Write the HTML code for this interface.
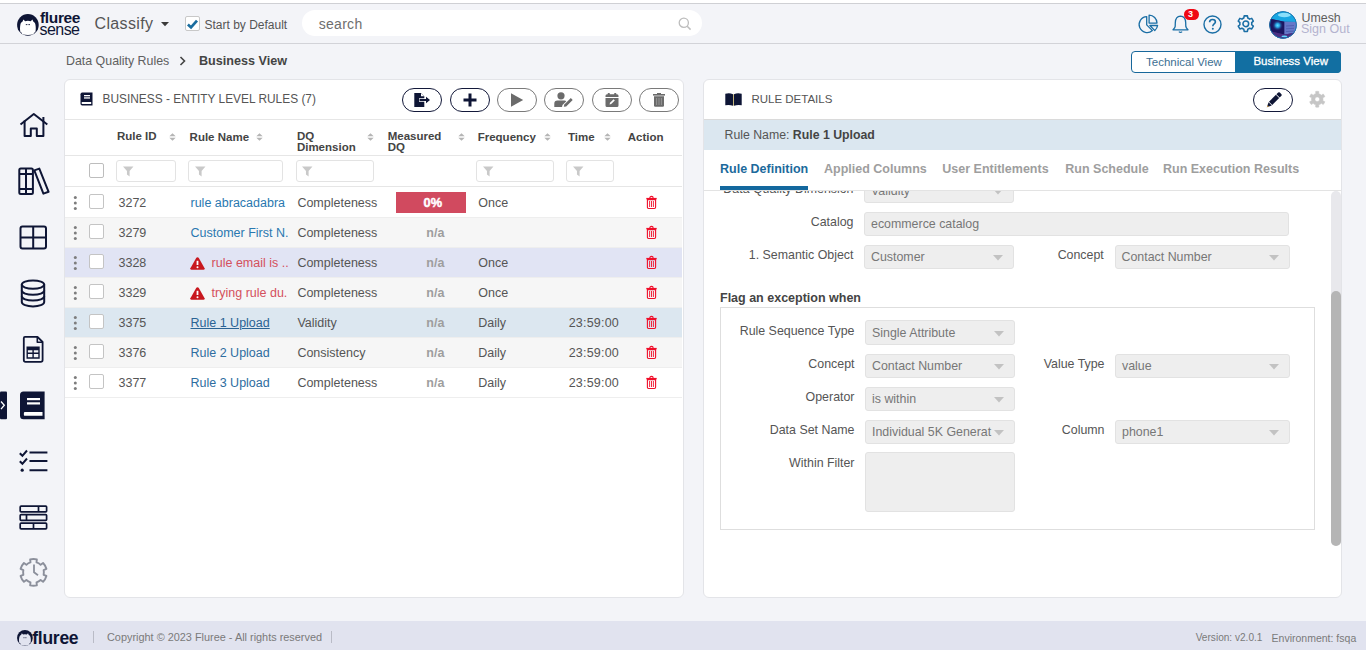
<!DOCTYPE html>
<html><head><meta charset="utf-8">
<style>
*{box-sizing:border-box;margin:0;padding:0}
html,body{width:1366px;height:650px;overflow:hidden}
body{position:relative;background:#f3f4f8;font-family:"Liberation Sans",sans-serif;color:#444}
.a{position:absolute}
.t{position:absolute;white-space:nowrap;line-height:1}
svg{position:absolute;overflow:visible}
</style></head><body>

<!-- top strip -->
<div class="a" style="left:0;top:0;width:1366px;height:3px;background:#fff"></div>
<div class="a" style="left:0;top:3px;width:1366px;height:1px;background:#cfd0d4"></div>
<div class="a" style="left:0;top:43px;width:1366px;height:1px;background:#d2d3d8"></div>

<!-- HEADER -->
<div id="header">
 <!-- logo -->
 <svg style="left:17px;top:13.5px" width="22" height="22" viewBox="0 0 22 22">
  <circle cx="10.9" cy="10.9" r="10.8" fill="#0e1535"/>
  <path d="M3.4 10.5 C3.6 9.2 4.5 8.2 5.6 7.6 L6.3 5.6 L8.2 7.2 Q10.9 6.5 13.6 7.2 L15.5 5.6 L16.2 7.6 C17.3 8.2 18.2 9.2 18.4 10.5 C18.9 13 19 15.8 18.3 18.3 L17 18.8 L16.6 20.2 Q10.9 21.6 5.2 20.2 L4.8 18.8 L3.5 18.3 C2.8 15.8 2.9 13 3.4 10.5Z" fill="#fff"/>
  <path d="M8.8 10.6h1.6M11.4 10.6h1.6" stroke="#0e1535" stroke-width="0.9"/>
 </svg>
 <div class="t" style="left:40px;top:12px;font-size:15.5px;font-weight:bold;color:#0e1535;letter-spacing:-0.35px;line-height:12px">fluree</div>
 <div class="t" style="left:39.5px;top:24px;font-size:16px;color:#0e1535;letter-spacing:-0.55px;line-height:12px">sense</div>
 <div class="t" style="left:94.5px;top:16.3px;font-size:16px;color:#555;letter-spacing:0.35px">Classify</div>
 <svg style="left:161px;top:21.8px" width="8" height="5" viewBox="0 0 8 5"><path d="M0 0h8L4 4.3z" fill="#3a3a3a"/></svg>
 <!-- checkbox -->
 <div class="a" style="left:185px;top:16px;width:15px;height:15px;border:1px solid #c8c8c8;border-radius:2px;background:#fff"></div>
 <svg style="left:187px;top:18px" width="11" height="11" viewBox="0 0 11 11"><path d="M0.9 6.6 L4 9.4 L10 2.6" fill="none" stroke="#1a6d9f" stroke-width="2.7"/></svg>
 <div class="t" style="left:204.5px;top:18.9px;font-size:12px;color:#555">Start by Default</div>
 <!-- search -->
 <div class="a" style="left:302px;top:10px;width:400px;height:26px;background:#fff;border-radius:13px"></div>
 <div class="t" style="left:318.7px;top:16.5px;font-size:14px;color:#6e6e6e;letter-spacing:0.3px">search</div>
 <svg style="left:678px;top:17px" width="14" height="14" viewBox="0 0 14 14"><circle cx="5.8" cy="5.8" r="4.6" fill="none" stroke="#bdbdbd" stroke-width="1.3"/><path d="M9.2 9.2 L12.6 12.6" stroke="#bdbdbd" stroke-width="1.5"/></svg>

 <!-- right icons -->
 <svg style="left:1138px;top:14px" width="21" height="20" viewBox="0 0 21 20">
  <path d="M8.7 2.6 A8 8 0 1 0 14.4 16.6 L8.7 10.9 Z" fill="none" stroke="#1a6ea5" stroke-width="1.3" stroke-linejoin="round"/>
  <path d="M11.1 1.1 A8 8 0 0 1 19 9.1 L11.1 9.1 Z" fill="none" stroke="#1a6ea5" stroke-width="1.3" stroke-linejoin="round"/>
  <path d="M11.9 11.5 L19.6 11.5 Q19.2 14.3 16.8 16.6 Z" fill="none" stroke="#1a6ea5" stroke-width="1.3" stroke-linejoin="round"/>
 </svg>
 <svg style="left:1172px;top:14.5px" width="18" height="19" viewBox="0 0 18 19">
  <path d="M8.5 1.2 C5 1.4 3.4 4.2 3.3 7.8 L3.2 11.4 Q3 13 1.2 14.4 Q0.8 14.9 1.4 14.9 H15.6 Q16.2 14.9 15.8 14.4 Q14 13 13.8 11.4 L13.7 7.8 C13.6 4.2 12 1.4 8.5 1.2Z" fill="none" stroke="#1a6ea5" stroke-width="1.3" stroke-linejoin="round"/>
  <path d="M6.9 16.6 Q8.5 18.3 10.1 16.6" fill="none" stroke="#1a6ea5" stroke-width="1.3"/>
 </svg>
 <div class="a" style="left:1184px;top:9px;width:15px;height:11px;border-radius:6px;background:#f00814"></div>
 <div class="t" style="left:1188px;top:10px;font-size:9px;font-weight:bold;color:#fff">3</div>
 <svg style="left:1203px;top:15px" width="19" height="19" viewBox="0 0 19 19">
  <circle cx="9.5" cy="9.5" r="8.5" fill="none" stroke="#1a6ea5" stroke-width="1.4"/>
  <path d="M6.6 7.2 C6.6 5.4 7.9 4.5 9.5 4.5 C11.2 4.5 12.4 5.6 12.4 7 C12.4 8.9 9.8 9.1 9.8 11.2" fill="none" stroke="#1a6ea5" stroke-width="1.6"/>
  <circle cx="9.8" cy="13.8" r="1" fill="#1a6ea5"/>
 </svg>
 <svg style="left:1237px;top:15.3px" width="17.6" height="17.6" viewBox="0 0 24 24">
  <path d="M9.8 1.2 h4.4 l.5 2.9 a8.4 8.4 0 0 1 2.6 1.5 l2.8-1 2.2 3.8-2.3 1.9 a8.4 8.4 0 0 1 0 3 l2.3 1.9-2.2 3.8-2.8-1 a8.4 8.4 0 0 1-2.6 1.5 l-.5 2.9 h-4.4 l-.5-2.9 a8.4 8.4 0 0 1-2.6-1.5 l-2.8 1-2.2-3.8 2.3-1.9 a8.4 8.4 0 0 1 0-3 l-2.3-1.9 2.2-3.8 2.8 1 a8.4 8.4 0 0 1 2.6-1.5z" fill="none" stroke="#1a6ea5" stroke-width="2.1" stroke-linejoin="round"/>
  <circle cx="12" cy="12" r="3.9" fill="none" stroke="#1a6ea5" stroke-width="2.1"/>
 </svg>
 <!-- avatar -->
 <svg style="left:1269px;top:11px" width="28" height="28" viewBox="0 0 28 28">
  <defs><clipPath id="avc"><circle cx="14" cy="14" r="13.6"/></clipPath>
  <radialGradient id="glow" cx="0.5" cy="0.5" r="0.5"><stop offset="0" stop-color="#5fe0ff"/><stop offset="0.35" stop-color="#2aa8e8"/><stop offset="1" stop-color="#1b1f66" stop-opacity="0"/></radialGradient></defs>
  <g clip-path="url(#avc)">
   <rect width="28" height="28" fill="#3a2a78"/>
   <path d="M0 0 H28 V11 L15.4 10.7 L0 7.5Z" fill="#18a6e2"/>
   <ellipse cx="15.4" cy="4" rx="6.5" ry="2.2" fill="#9fe9ff" opacity="0.85"/>
   <path d="M0 7.5 L15.4 10.7 V23.5 L0 20Z" fill="#1b1660"/>
   <circle cx="8.6" cy="14.4" r="5.5" fill="url(#glow)"/>
   <path d="M15.4 10.7 L28 11 V21.5 L15.4 23.5Z" fill="#6678c8"/>
   <path d="M17 15 L25 14.5 M17 17.8 L25 17.3 M17 20.6 L25 20.1" stroke="#4656a8" stroke-width="0.7"/>
   <path d="M0 20 L15.4 23.5 L28 21.5 V28 H0Z" fill="#4b2f82"/>
   <ellipse cx="15.4" cy="25.3" rx="3" ry="0.9" fill="#5fd8ff"/>
  </g>
  <circle cx="14" cy="14" r="13.4" fill="none" stroke="#1479b0" stroke-width="0.9"/>
 </svg>
 <div class="t" style="left:1301.5px;top:11.8px;font-size:12.4px;color:#5e5e5e">Umesh</div>
 <div class="t" style="left:1301px;top:23px;font-size:12.5px;color:#b3b3cf">Sign Out</div>

 <!-- breadcrumb -->
 <div class="t" style="left:66px;top:55px;font-size:12.4px;color:#606060">Data Quality Rules</div>
 <svg style="left:179px;top:56px" width="7" height="10" viewBox="0 0 7 10"><path d="M1.5 1 L5.5 5 L1.5 9" fill="none" stroke="#444" stroke-width="1.6"/></svg>
 <div class="t" style="left:199px;top:55px;font-size:12.6px;font-weight:bold;color:#444">Business View</div>

 <!-- view toggle -->
 <div class="a" style="left:1131px;top:51px;width:210px;height:22px;border:1px solid #17679b;border-radius:4px;background:#fff"></div>
 <div class="a" style="left:1235px;top:51px;width:106px;height:22px;background:#126fa2;border-radius:0 4px 4px 0"></div>
 <div class="t" style="left:1146px;top:57px;font-size:11.5px;color:#3d6f93">Technical View</div>
 <div class="t" style="left:1253.4px;top:56.2px;font-size:11.5px;color:#fff;-webkit-text-stroke:0.3px #fff">Business View</div>
</div>

<!-- SIDEBAR -->
<svg style="left:0;top:0" width="64" height="621" viewBox="0 0 64 621">
 <g fill="none" stroke="#0e1535" stroke-width="2" stroke-linejoin="round">
  <!-- home -->
  <path d="M20.5 124.5 L33.8 114 L47.3 124.5"/>
  <path d="M24.6 120.5 V136 H30.8 V128.5 H36.8 V136 H43.4 V117"/>
  <!-- books -->
  <rect x="19.3" y="168.5" width="13.6" height="25.4" rx="1.5"/>
  <path d="M26 168.5 V194 M19.3 174 H33 M19.3 189 H33"/>
  <path d="M34.3 170.4 L39.3 168.6 L48.6 191.8 L43.4 193.6 Z"/>
  <!-- grid -->
  <rect x="20.5" y="226.5" width="25.5" height="22" rx="2"/>
  <path d="M33.2 226.5 V248.5 M20.5 237.4 H46"/>
  <!-- database -->
  <ellipse cx="33" cy="284.6" rx="11.2" ry="4.2"/>
  <path d="M21.8 284.6 V302 C21.8 304.6 26.8 306.4 33 306.4 C39.2 306.4 44.2 304.6 44.2 302 V284.6"/>
  <path d="M21.8 290.5 C21.8 293 26.8 294.8 33 294.8 C39.2 294.8 44.2 293 44.2 290.5"/>
  <path d="M21.8 296.3 C21.8 298.8 26.8 300.6 33 300.6 C39.2 300.6 44.2 298.8 44.2 296.3"/>
  <!-- file spreadsheet -->
  <path d="M25 336.8 H37.5 L42.6 342 V360 Q42.6 361.8 40.8 361.8 H25.5 Q23.8 361.8 23.8 360 V338.3 Q23.8 336.8 25 336.8Z" stroke-width="1.8"/>
  <path d="M37.3 337 V342.2 H42.5" stroke-width="1.6"/>
 </g>
 <g fill="#0e1535">
  <path d="M26.5 346.5 H39.7 V358.7 H26.5Z M27.9 350.2 H32.4 V352.6 H27.9Z M33.8 350.2 H38.3 V352.6 H33.8Z M27.9 354 H32.4 V357.3 H27.9Z M33.8 354 H38.3 V357.3 H33.8Z" fill-rule="evenodd"/>
  <!-- active book -->
  <path d="M23.5 391.5 H44.6 V419.2 H23.5 Q20 419.2 20 415.7 V395 Q20 391.5 23.5 391.5Z"/>
  <!-- indicator -->
  <rect x="0" y="391.5" width="7" height="27.7" rx="1"/>
 </g>
 <g fill="#fff">
  <rect x="27" y="398" width="13" height="2.2"/>
  <rect x="27" y="402.3" width="13" height="2.2"/>
  <path d="M24.6 412 H42.5 V415.8 H24.6 Q23.8 415.8 23.8 413.9 Q23.8 412 24.6 412Z"/>
 </g>
 <path d="M1 401.5 L4.3 405.3 L1 409.1" fill="none" stroke="#fff" stroke-width="1.3"/>
 <g fill="none" stroke="#0e1535" stroke-width="2">
  <!-- checklist -->
  <path d="M19.8 453.2 L22.4 455.8 L27 450.5" />
  <path d="M19.8 461.2 L22.4 463.8 L27 458.5" />
  <path d="M29.5 452.6 H47.4 M29.5 461 H47.4 M29.5 470.2 H47.4"/>
 </g>
 <circle cx="22.2" cy="470.2" r="1.6" fill="#0e1535"/>
 <g fill="none" stroke="#0e1535" stroke-width="2">
  <!-- rows -->
  <rect x="20.2" y="506.1" width="26.4" height="5.8" rx="0.9" stroke-width="1.7"/>
  <rect x="20.2" y="514.6" width="26.4" height="5.8" rx="0.9" stroke-width="1.7"/>
  <rect x="20.2" y="523.1" width="26.4" height="5.8" rx="0.9" stroke-width="1.7"/>
  <path d="M38.5 506.1 V511.9 M26.5 514.6 V520.4 M33.5 523.1 V528.9" stroke-width="1.7"/>
 </g>
 <!-- gear clock -->
 <g fill="none" stroke="#8b8f9b" stroke-width="1.9" stroke-linejoin="round">
  <path d="M30.49 562.44 L30.16 559.42 A13.4 13.4 0 0 1 36.84 559.42 L36.51 562.44 A10.4 10.4 0 0 1 40.62 564.82 L43.07 563.02 A13.4 13.4 0 0 1 46.41 568.81 L43.63 570.03 A10.4 10.4 0 0 1 43.63 574.77 L46.41 575.99 A13.4 13.4 0 0 1 43.07 581.78 L40.62 579.98 A10.4 10.4 0 0 1 36.51 582.36 L36.84 585.38 A13.4 13.4 0 0 1 30.16 585.38 L30.49 582.36 A10.4 10.4 0 0 1 26.38 579.98 L23.93 581.78 A13.4 13.4 0 0 1 20.59 575.99 L23.37 574.77 A10.4 10.4 0 0 1 23.37 570.03 L20.59 568.81 A13.4 13.4 0 0 1 23.93 563.02 L26.38 564.82 A10.4 10.4 0 0 1 30.49 562.44Z"/>
  <path d="M34 564.6 V572.3 L38 575.3" stroke-width="1.8"/>
 </g>
</svg>

<!-- LEFT PANEL -->
<div class="a" style="left:64px;top:79px;width:620px;height:519px;background:#fff;border:1px solid #e3e4e8;border-radius:6px"></div>

<!-- LEFT PANEL CONTENT -->
<svg style="left:80px;top:92px" width="13" height="14" viewBox="0 0 13 14">
 <path d="M2.2 0.5 H12.5 V13.5 H2.2 Q0.5 13.5 0.5 11.8 V2.2 Q0.5 0.5 2.2 0.5Z" fill="#0e1535"/>
 <rect x="4" y="3" width="6" height="1.3" fill="#fff"/><rect x="4" y="5.3" width="6" height="1.3" fill="#fff"/>
 <path d="M2.3 10 H11.2 V12 H2.3 Q1.6 12 1.6 11 Q1.6 10 2.3 10Z" fill="#fff"/>
</svg>
<div class="t" style="left:102.5px;top:93.6px;font-size:11.9px;color:#555">BUSINESS - ENTITY LEVEL RULES (7)</div>

<div class="a" style="left:402px;top:88px;width:40px;height:24px;border:1.5px solid #13193a;border-radius:12px"></div>
<div class="a" style="left:450px;top:88px;width:40px;height:24px;border:1.5px solid #13193a;border-radius:12px"></div>
<div class="a" style="left:497px;top:88px;width:40px;height:24px;border:1.5px solid #7a7a7a;border-radius:12px"></div>
<div class="a" style="left:544px;top:88px;width:40px;height:24px;border:1.5px solid #7a7a7a;border-radius:12px"></div>
<div class="a" style="left:592px;top:88px;width:40px;height:24px;border:1.5px solid #7a7a7a;border-radius:12px"></div>
<div class="a" style="left:639px;top:88px;width:40px;height:24px;border:1.5px solid #7a7a7a;border-radius:12px"></div>
<svg style="left:414px;top:93px" width="17" height="14" viewBox="0 0 17 14">
 <path d="M0.3 0 H7 L10.3 3.3 V5.3 H5 V8.7 H10.3 V14 H0.3Z" fill="#0e1535"/><path d="M7 0 V3.3 H10.3Z" fill="#fff"/>
 <path d="M5.5 6 H12 V3.8 L16 7 L12 10.2 V8 H5.5Z" fill="#0e1535"/>
</svg>
<svg style="left:463px;top:93px" width="14" height="14" viewBox="0 0 14 14"><path d="M7 0.5 V13.5 M0.5 7 H13.5" stroke="#0e1535" stroke-width="3"/></svg>
<svg style="left:510px;top:93px" width="14" height="14" viewBox="0 0 14 14"><path d="M1 0.3 L13.2 7 L1 13.7Z" fill="#6b6b6b"/></svg>
<svg style="left:554px;top:92px" width="20" height="15" viewBox="0 0 20 15">
 <circle cx="7" cy="3.8" r="3.6" fill="#6b6b6b"/>
 <path d="M0.3 15 V11.8 Q0.3 8.6 3.5 8.6 H10.5 Q11.6 8.6 12.3 9.2 L8.5 13 L8 15Z" fill="#6b6b6b"/>
 <path d="M9.8 14.8 L10.3 12.6 L16.8 6.1 L18.7 8 L12.2 14.5Z" fill="#6b6b6b"/>
</svg>
<svg style="left:605px;top:93px" width="14" height="14" viewBox="0 0 14 14">
 <path d="M2 1.3 H12 Q13.5 1.3 13.5 2.8 V12.5 Q13.5 14 12 14 H2 Q0.5 14 0.5 12.5 V2.8 Q0.5 1.3 2 1.3Z M0.5 3.9 H13.5 V4.9 H0.5Z" fill="#6b6b6b" fill-rule="evenodd"/>
 <rect x="2.8" y="0" width="2" height="2.6" rx="0.6" fill="#6b6b6b"/><rect x="9.2" y="0" width="2" height="2.6" rx="0.6" fill="#6b6b6b"/>
 <path d="M4.6 11.5 L5 9.8 L8.6 6.2 L9.8 7.4 L6.2 11Z" fill="#fff"/>
</svg>
<svg style="left:653px;top:93px" width="12" height="14" viewBox="0 0 12 14">
 <rect x="0" y="1" width="12" height="1.6" fill="#6b6b6b"/><rect x="4" y="0" width="4" height="1.4" fill="#6b6b6b"/>
 <path d="M1 3.3 H11 V12.6 Q11 13.8 9.8 13.8 H2.2 Q1 13.8 1 12.6Z" fill="#6b6b6b"/>
 <path d="M3.6 5 V12 M6 5 V12 M8.4 5 V12" stroke="#9a9a9a" stroke-width="0.9"/>
</svg>
<div class="a" style="left:65px;top:119px;width:618px;height:1px;background:#e6e6e6"></div>

<div class="t" style="left:117px;top:130.8px;font-size:11.5px;font-weight:bold;color:#444">Rule ID</div><svg style="left:169px;top:133px" width="7" height="8" viewBox="0 0 7 8"><path d="M0.3 3.2 L3.5 0.2 L6.7 3.2Z M0.3 4.8 L3.5 7.8 L6.7 4.8Z" fill="#b5b5b5"/></svg>
<div class="t" style="left:189.6px;top:131.8px;font-size:11.5px;font-weight:bold;color:#444">Rule Name</div><svg style="left:256px;top:133px" width="7" height="8" viewBox="0 0 7 8"><path d="M0.3 3.2 L3.5 0.2 L6.7 3.2Z M0.3 4.8 L3.5 7.8 L6.7 4.8Z" fill="#b5b5b5"/></svg>
<div class="t" style="left:296.9px;top:131.2px;font-size:11.5px;font-weight:bold;color:#444;line-height:11px">DQ<br>Dimension</div><svg style="left:367px;top:133px" width="7" height="8" viewBox="0 0 7 8"><path d="M0.3 3.2 L3.5 0.2 L6.7 3.2Z M0.3 4.8 L3.5 7.8 L6.7 4.8Z" fill="#b5b5b5"/></svg>
<div class="t" style="left:387.7px;top:131.2px;font-size:11.5px;font-weight:bold;color:#444;line-height:11px">Measured<br>DQ</div><svg style="left:457.5px;top:133px" width="7" height="8" viewBox="0 0 7 8"><path d="M0.3 3.2 L3.5 0.2 L6.7 3.2Z M0.3 4.8 L3.5 7.8 L6.7 4.8Z" fill="#b5b5b5"/></svg>
<div class="t" style="left:477.7px;top:131.8px;font-size:11.5px;font-weight:bold;color:#444">Frequency</div><svg style="left:544px;top:133px" width="7" height="8" viewBox="0 0 7 8"><path d="M0.3 3.2 L3.5 0.2 L6.7 3.2Z M0.3 4.8 L3.5 7.8 L6.7 4.8Z" fill="#b5b5b5"/></svg>
<div class="t" style="left:568px;top:131.8px;font-size:11.5px;font-weight:bold;color:#444">Time</div><svg style="left:603.5px;top:133px" width="7" height="8" viewBox="0 0 7 8"><path d="M0.3 3.2 L3.5 0.2 L6.7 3.2Z M0.3 4.8 L3.5 7.8 L6.7 4.8Z" fill="#b5b5b5"/></svg>
<div class="t" style="left:627.8px;top:131.8px;font-size:11.5px;font-weight:bold;color:#444">Action</div>
<div class="a" style="left:65px;top:155px;width:617px;height:1px;background:#e6e6e6"></div>
<div class="a" style="left:89px;top:163px;width:15px;height:15px;border:1px solid #bdbdbd;border-radius:2px;background:#fff"></div>
<div class="a" style="left:116px;top:160px;width:60px;height:22px;border:1px solid #e3e3e3;border-radius:3px;background:#fff"></div>
<svg style="left:122.8px;top:166px" width="11" height="11" viewBox="0 0 10 10"><path d="M0 0.5 H9.5 L6 4.6 V9.5 L3.6 7.8 V4.6Z" fill="#c9c9c9"/></svg>
<div class="a" style="left:188px;top:160px;width:95px;height:22px;border:1px solid #e3e3e3;border-radius:3px;background:#fff"></div>
<svg style="left:194.8px;top:166px" width="11" height="11" viewBox="0 0 10 10"><path d="M0 0.5 H9.5 L6 4.6 V9.5 L3.6 7.8 V4.6Z" fill="#c9c9c9"/></svg>
<div class="a" style="left:295.5px;top:160px;width:78px;height:22px;border:1px solid #e3e3e3;border-radius:3px;background:#fff"></div>
<svg style="left:302.3px;top:166px" width="11" height="11" viewBox="0 0 10 10"><path d="M0 0.5 H9.5 L6 4.6 V9.5 L3.6 7.8 V4.6Z" fill="#c9c9c9"/></svg>
<div class="a" style="left:476px;top:160px;width:78px;height:22px;border:1px solid #e3e3e3;border-radius:3px;background:#fff"></div>
<svg style="left:482.8px;top:166px" width="11" height="11" viewBox="0 0 10 10"><path d="M0 0.5 H9.5 L6 4.6 V9.5 L3.6 7.8 V4.6Z" fill="#c9c9c9"/></svg>
<div class="a" style="left:566px;top:160px;width:48px;height:22px;border:1px solid #e3e3e3;border-radius:3px;background:#fff"></div>
<svg style="left:572.8px;top:166px" width="11" height="11" viewBox="0 0 10 10"><path d="M0 0.5 H9.5 L6 4.6 V9.5 L3.6 7.8 V4.6Z" fill="#c9c9c9"/></svg>
<div class="a" style="left:65px;top:185.5px;width:617px;height:1.6px;background:#e6e6e6"></div>
<div class="a" style="left:65px;top:188px;width:617px;height:29px;background:#fff"></div>
<svg style="left:72px;top:187px" width="6" height="30" viewBox="0 0 6 30"><circle cx="3.3" cy="10.4" r="1.5" fill="#7d7d7d"/><circle cx="3.3" cy="15.9" r="1.5" fill="#7d7d7d"/><circle cx="3.3" cy="21.4" r="1.5" fill="#7d7d7d"/></svg>
<div class="a" style="left:89px;top:194px;width:14.6px;height:14.6px;border:1px solid #c4c4c4;border-radius:2px;background:#fff"></div>
<div class="t" style="left:118.5px;top:197.0px;font-size:12.5px;color:#555">3272</div>
<div class="t" style="left:190.5px;top:197.0px;font-size:12.5px;color:#2a78b0;">rule abracadabra</div>
<div class="t" style="left:297.4px;top:197.0px;font-size:12.5px;color:#555">Completeness</div>
<div class="a" style="left:396px;top:192.3px;width:70px;height:20.5px;background:#d14a5f"></div>
<div class="t" style="left:398px;width:70px;text-align:center;top:197px;font-size:12.8px;font-weight:700;color:#fff;letter-spacing:0.2px;-webkit-text-stroke:0.45px #fff">0%</div>
<div class="t" style="left:478.3px;top:197.0px;font-size:12.5px;color:#555">Once</div>
<svg style="left:646px;top:196.0px" width="11" height="13" viewBox="0 0 11 13"><path d="M0.3 2.6 H10.7" stroke="#f00f2a" stroke-width="1.4"/><path d="M3.8 2.2 Q3.8 0.4 5.5 0.4 Q7.2 0.4 7.2 2.2" fill="none" stroke="#f00f2a" stroke-width="1.1"/><path d="M1.4 3.6 H9.6 V11.3 Q9.6 12.5 8.4 12.5 H2.6 Q1.4 12.5 1.4 11.3Z" fill="none" stroke="#f00f2a" stroke-width="1.1"/><path d="M3.6 5 V11 M5.5 5 V11 M7.4 5 V11" stroke="#f00f2a" stroke-width="0.9"/></svg>
<div class="a" style="left:65px;top:217px;width:617px;height:1px;background:#eeeeee"></div>
<div class="a" style="left:65px;top:218px;width:617px;height:29px;background:#f6f6f6"></div>
<svg style="left:72px;top:217px" width="6" height="30" viewBox="0 0 6 30"><circle cx="3.3" cy="10.4" r="1.5" fill="#7d7d7d"/><circle cx="3.3" cy="15.9" r="1.5" fill="#7d7d7d"/><circle cx="3.3" cy="21.4" r="1.5" fill="#7d7d7d"/></svg>
<div class="a" style="left:89px;top:224px;width:14.6px;height:14.6px;border:1px solid #c4c4c4;border-radius:2px;background:#fff"></div>
<div class="t" style="left:118.5px;top:227.0px;font-size:12.5px;color:#555">3279</div>
<div class="t" style="left:190.5px;top:227.0px;font-size:12.5px;color:#2a78b0;">Customer First N.</div>
<div class="t" style="left:297.4px;top:227.0px;font-size:12.5px;color:#555">Completeness</div>
<div class="t" style="left:426.3px;top:227.0px;font-size:12.5px;font-weight:bold;color:#9e9e9e">n/a</div>
<svg style="left:646px;top:226.0px" width="11" height="13" viewBox="0 0 11 13"><path d="M0.3 2.6 H10.7" stroke="#f00f2a" stroke-width="1.4"/><path d="M3.8 2.2 Q3.8 0.4 5.5 0.4 Q7.2 0.4 7.2 2.2" fill="none" stroke="#f00f2a" stroke-width="1.1"/><path d="M1.4 3.6 H9.6 V11.3 Q9.6 12.5 8.4 12.5 H2.6 Q1.4 12.5 1.4 11.3Z" fill="none" stroke="#f00f2a" stroke-width="1.1"/><path d="M3.6 5 V11 M5.5 5 V11 M7.4 5 V11" stroke="#f00f2a" stroke-width="0.9"/></svg>
<div class="a" style="left:65px;top:247px;width:617px;height:1px;background:#eeeeee"></div>
<div class="a" style="left:65px;top:248px;width:617px;height:29px;background:#e1e4f4"></div>
<svg style="left:72px;top:247px" width="6" height="30" viewBox="0 0 6 30"><circle cx="3.3" cy="10.4" r="1.5" fill="#7d7d7d"/><circle cx="3.3" cy="15.9" r="1.5" fill="#7d7d7d"/><circle cx="3.3" cy="21.4" r="1.5" fill="#7d7d7d"/></svg>
<div class="a" style="left:89px;top:254px;width:14.6px;height:14.6px;border:1px solid #c4c4c4;border-radius:2px;background:#fff"></div>
<div class="t" style="left:118.5px;top:257.0px;font-size:12.5px;color:#555">3328</div>
<svg style="left:190px;top:257px" width="15" height="13" viewBox="0 0 15 13"><path d="M7.5 0.3 Q8.3 0.3 8.8 1.1 L14.6 11.3 Q15.1 12.6 13.6 12.7 H1.4 Q-0.1 12.6 0.4 11.3 L6.2 1.1 Q6.7 0.3 7.5 0.3Z" fill="#c8171e"/><path d="M7.5 3.8 V8" stroke="#fff" stroke-width="1.8"/><circle cx="7.5" cy="10.2" r="1" fill="#fff"/></svg>
<div class="t" style="left:211.6px;top:257.0px;font-size:12.5px;color:#d4505c;">rule email is ..</div>
<div class="t" style="left:297.4px;top:257.0px;font-size:12.5px;color:#555">Completeness</div>
<div class="t" style="left:426.3px;top:257.0px;font-size:12.5px;font-weight:bold;color:#9e9e9e">n/a</div>
<div class="t" style="left:478.3px;top:257.0px;font-size:12.5px;color:#555">Once</div>
<svg style="left:646px;top:256.0px" width="11" height="13" viewBox="0 0 11 13"><path d="M0.3 2.6 H10.7" stroke="#f00f2a" stroke-width="1.4"/><path d="M3.8 2.2 Q3.8 0.4 5.5 0.4 Q7.2 0.4 7.2 2.2" fill="none" stroke="#f00f2a" stroke-width="1.1"/><path d="M1.4 3.6 H9.6 V11.3 Q9.6 12.5 8.4 12.5 H2.6 Q1.4 12.5 1.4 11.3Z" fill="none" stroke="#f00f2a" stroke-width="1.1"/><path d="M3.6 5 V11 M5.5 5 V11 M7.4 5 V11" stroke="#f00f2a" stroke-width="0.9"/></svg>
<div class="a" style="left:65px;top:277px;width:617px;height:1px;background:#eeeeee"></div>
<div class="a" style="left:65px;top:278px;width:617px;height:29px;background:#f6f6f6"></div>
<svg style="left:72px;top:277px" width="6" height="30" viewBox="0 0 6 30"><circle cx="3.3" cy="10.4" r="1.5" fill="#7d7d7d"/><circle cx="3.3" cy="15.9" r="1.5" fill="#7d7d7d"/><circle cx="3.3" cy="21.4" r="1.5" fill="#7d7d7d"/></svg>
<div class="a" style="left:89px;top:284px;width:14.6px;height:14.6px;border:1px solid #c4c4c4;border-radius:2px;background:#fff"></div>
<div class="t" style="left:118.5px;top:287.0px;font-size:12.5px;color:#555">3329</div>
<svg style="left:190px;top:287px" width="15" height="13" viewBox="0 0 15 13"><path d="M7.5 0.3 Q8.3 0.3 8.8 1.1 L14.6 11.3 Q15.1 12.6 13.6 12.7 H1.4 Q-0.1 12.6 0.4 11.3 L6.2 1.1 Q6.7 0.3 7.5 0.3Z" fill="#c8171e"/><path d="M7.5 3.8 V8" stroke="#fff" stroke-width="1.8"/><circle cx="7.5" cy="10.2" r="1" fill="#fff"/></svg>
<div class="t" style="left:211.6px;top:287.0px;font-size:12.5px;color:#d4505c;">trying rule du.</div>
<div class="t" style="left:297.4px;top:287.0px;font-size:12.5px;color:#555">Completeness</div>
<div class="t" style="left:426.3px;top:287.0px;font-size:12.5px;font-weight:bold;color:#9e9e9e">n/a</div>
<div class="t" style="left:478.3px;top:287.0px;font-size:12.5px;color:#555">Once</div>
<svg style="left:646px;top:286.0px" width="11" height="13" viewBox="0 0 11 13"><path d="M0.3 2.6 H10.7" stroke="#f00f2a" stroke-width="1.4"/><path d="M3.8 2.2 Q3.8 0.4 5.5 0.4 Q7.2 0.4 7.2 2.2" fill="none" stroke="#f00f2a" stroke-width="1.1"/><path d="M1.4 3.6 H9.6 V11.3 Q9.6 12.5 8.4 12.5 H2.6 Q1.4 12.5 1.4 11.3Z" fill="none" stroke="#f00f2a" stroke-width="1.1"/><path d="M3.6 5 V11 M5.5 5 V11 M7.4 5 V11" stroke="#f00f2a" stroke-width="0.9"/></svg>
<div class="a" style="left:65px;top:307px;width:617px;height:1px;background:#eeeeee"></div>
<div class="a" style="left:65px;top:308px;width:617px;height:29px;background:#dce7f0"></div>
<svg style="left:72px;top:307px" width="6" height="30" viewBox="0 0 6 30"><circle cx="3.3" cy="10.4" r="1.5" fill="#7d7d7d"/><circle cx="3.3" cy="15.9" r="1.5" fill="#7d7d7d"/><circle cx="3.3" cy="21.4" r="1.5" fill="#7d7d7d"/></svg>
<div class="a" style="left:89px;top:314px;width:14.6px;height:14.6px;border:1px solid #c4c4c4;border-radius:2px;background:#fff"></div>
<div class="t" style="left:118.5px;top:317.0px;font-size:12.5px;color:#555">3375</div>
<div class="t" style="left:190.5px;top:317.0px;font-size:12.5px;color:#2a6394;text-decoration:underline;">Rule 1 Upload</div>
<div class="t" style="left:297.4px;top:317.0px;font-size:12.5px;color:#555">Validity</div>
<div class="t" style="left:426.3px;top:317.0px;font-size:12.5px;font-weight:bold;color:#9e9e9e">n/a</div>
<div class="t" style="left:478.3px;top:317.0px;font-size:12.5px;color:#555">Daily</div>
<div class="t" style="left:568.7px;top:317.0px;font-size:12.5px;color:#555;letter-spacing:0.2px">23:59:00</div>
<svg style="left:646px;top:316.0px" width="11" height="13" viewBox="0 0 11 13"><path d="M0.3 2.6 H10.7" stroke="#f00f2a" stroke-width="1.4"/><path d="M3.8 2.2 Q3.8 0.4 5.5 0.4 Q7.2 0.4 7.2 2.2" fill="none" stroke="#f00f2a" stroke-width="1.1"/><path d="M1.4 3.6 H9.6 V11.3 Q9.6 12.5 8.4 12.5 H2.6 Q1.4 12.5 1.4 11.3Z" fill="none" stroke="#f00f2a" stroke-width="1.1"/><path d="M3.6 5 V11 M5.5 5 V11 M7.4 5 V11" stroke="#f00f2a" stroke-width="0.9"/></svg>
<div class="a" style="left:65px;top:337px;width:617px;height:1px;background:#eeeeee"></div>
<div class="a" style="left:65px;top:338px;width:617px;height:29px;background:#f6f6f6"></div>
<svg style="left:72px;top:337px" width="6" height="30" viewBox="0 0 6 30"><circle cx="3.3" cy="10.4" r="1.5" fill="#7d7d7d"/><circle cx="3.3" cy="15.9" r="1.5" fill="#7d7d7d"/><circle cx="3.3" cy="21.4" r="1.5" fill="#7d7d7d"/></svg>
<div class="a" style="left:89px;top:344px;width:14.6px;height:14.6px;border:1px solid #c4c4c4;border-radius:2px;background:#fff"></div>
<div class="t" style="left:118.5px;top:347.0px;font-size:12.5px;color:#555">3376</div>
<div class="t" style="left:190.5px;top:347.0px;font-size:12.5px;color:#2d6da0;">Rule 2 Upload</div>
<div class="t" style="left:297.4px;top:347.0px;font-size:12.5px;color:#555">Consistency</div>
<div class="t" style="left:426.3px;top:347.0px;font-size:12.5px;font-weight:bold;color:#9e9e9e">n/a</div>
<div class="t" style="left:478.3px;top:347.0px;font-size:12.5px;color:#555">Daily</div>
<div class="t" style="left:568.7px;top:347.0px;font-size:12.5px;color:#555;letter-spacing:0.2px">23:59:00</div>
<svg style="left:646px;top:346.0px" width="11" height="13" viewBox="0 0 11 13"><path d="M0.3 2.6 H10.7" stroke="#f00f2a" stroke-width="1.4"/><path d="M3.8 2.2 Q3.8 0.4 5.5 0.4 Q7.2 0.4 7.2 2.2" fill="none" stroke="#f00f2a" stroke-width="1.1"/><path d="M1.4 3.6 H9.6 V11.3 Q9.6 12.5 8.4 12.5 H2.6 Q1.4 12.5 1.4 11.3Z" fill="none" stroke="#f00f2a" stroke-width="1.1"/><path d="M3.6 5 V11 M5.5 5 V11 M7.4 5 V11" stroke="#f00f2a" stroke-width="0.9"/></svg>
<div class="a" style="left:65px;top:367px;width:617px;height:1px;background:#eeeeee"></div>
<div class="a" style="left:65px;top:368px;width:617px;height:29px;background:#fff"></div>
<svg style="left:72px;top:367px" width="6" height="30" viewBox="0 0 6 30"><circle cx="3.3" cy="10.4" r="1.5" fill="#7d7d7d"/><circle cx="3.3" cy="15.9" r="1.5" fill="#7d7d7d"/><circle cx="3.3" cy="21.4" r="1.5" fill="#7d7d7d"/></svg>
<div class="a" style="left:89px;top:374px;width:14.6px;height:14.6px;border:1px solid #c4c4c4;border-radius:2px;background:#fff"></div>
<div class="t" style="left:118.5px;top:377.0px;font-size:12.5px;color:#555">3377</div>
<div class="t" style="left:190.5px;top:377.0px;font-size:12.5px;color:#2d6da0;">Rule 3 Upload</div>
<div class="t" style="left:297.4px;top:377.0px;font-size:12.5px;color:#555">Completeness</div>
<div class="t" style="left:426.3px;top:377.0px;font-size:12.5px;font-weight:bold;color:#9e9e9e">n/a</div>
<div class="t" style="left:478.3px;top:377.0px;font-size:12.5px;color:#555">Daily</div>
<div class="t" style="left:568.7px;top:377.0px;font-size:12.5px;color:#555;letter-spacing:0.2px">23:59:00</div>
<svg style="left:646px;top:376.0px" width="11" height="13" viewBox="0 0 11 13"><path d="M0.3 2.6 H10.7" stroke="#f00f2a" stroke-width="1.4"/><path d="M3.8 2.2 Q3.8 0.4 5.5 0.4 Q7.2 0.4 7.2 2.2" fill="none" stroke="#f00f2a" stroke-width="1.1"/><path d="M1.4 3.6 H9.6 V11.3 Q9.6 12.5 8.4 12.5 H2.6 Q1.4 12.5 1.4 11.3Z" fill="none" stroke="#f00f2a" stroke-width="1.1"/><path d="M3.6 5 V11 M5.5 5 V11 M7.4 5 V11" stroke="#f00f2a" stroke-width="0.9"/></svg>
<div class="a" style="left:65px;top:397px;width:617px;height:1px;background:#eeeeee"></div>
<!-- RIGHT PANEL -->
<div class="a" style="left:703px;top:79px;width:639px;height:519px;background:#fff;border:1px solid #e3e4e8;border-radius:6px"></div>

<!-- RIGHT PANEL CONTENT -->
<svg style="left:724.5px;top:92.5px" width="17" height="13" viewBox="0 0 17 13">
 <path d="M0.3 0.8 Q4.5 -0.3 8 1.2 V12.8 Q4.5 11.4 0.3 12.3Z" fill="#0e1535"/>
 <path d="M16.7 0.8 Q12.5 -0.3 9 1.2 V12.8 Q12.5 11.4 16.7 12.3Z" fill="#0e1535"/>
 <path d="M8.5 1.3 V12.6" stroke="#b8a45a" stroke-width="0.8"/>
</svg>
<div class="t" style="left:751.4px;top:94px;font-size:11.5px;color:#555">RULE DETAILS</div>
<div class="a" style="left:1253px;top:88px;width:40px;height:24px;border:1.8px solid #13193a;border-radius:12px"></div>
<svg style="left:1265.8px;top:92.6px" width="15" height="15" viewBox="0 0 15 15">
 <g transform="rotate(45 7.5 7.5)">
  <path d="M5.2 -1.4 Q5.2 -2.6 6.4 -2.6 H8.6 Q9.8 -2.6 9.8 -1.4 V1.1 H5.2Z" fill="#0e1535"/>
  <rect x="5.2" y="1.8" width="4.6" height="9.8" fill="#0e1535"/>
  <path d="M5.2 12.2 H9.8 L7.5 16.9Z" fill="#0e1535"/>
  <path d="M6.6 15 L8.4 15 L7.5 16.9Z" fill="#e0a848"/>
 </g>
</svg>
<svg style="left:1309px;top:91px" width="16.5" height="16.5" viewBox="0 0 24 24"><path d="M9.83 3.89 L9.65 0.64 A11.6 11.6 0 0 1 14.35 0.64 L14.17 3.89 A8.4 8.4 0 0 1 17.94 6.06 L20.66 4.28 A11.6 11.6 0 0 1 23.01 8.36 L20.11 9.83 A8.4 8.4 0 0 1 20.11 14.17 L23.01 15.64 A11.6 11.6 0 0 1 20.66 19.72 L17.94 17.94 A8.4 8.4 0 0 1 14.17 20.11 L14.35 23.36 A11.6 11.6 0 0 1 9.65 23.36 L9.83 20.11 A8.4 8.4 0 0 1 6.06 17.94 L3.34 19.72 A11.6 11.6 0 0 1 0.99 15.64 L3.89 14.17 A8.4 8.4 0 0 1 3.89 9.83 L0.99 8.36 A11.6 11.6 0 0 1 3.34 4.28 L6.06 6.06 A8.4 8.4 0 0 1 9.83 3.89Z M15.4 12 A3.4 3.4 0 1 0 15.4 12.01Z" fill="#c6c6c6" fill-rule="evenodd" stroke="#c6c6c6" stroke-width="0.8" stroke-linejoin="round"/></svg>
<div class="a" style="left:704px;top:119px;width:637px;height:31px;background:#dbe7f0;border-top:1px solid #dadada"></div>
<div class="t" style="left:724.5px;top:128.6px;font-size:12.3px;color:#555">Rule Name: <b style="color:#444">Rule 1 Upload</b></div>

<div class="t" style="left:720px;top:162.8px;font-size:12.5px;font-weight:bold;color:#1c6a9c">Rule Definition</div>
<div class="t" style="left:824px;top:162.8px;font-size:12.5px;font-weight:bold;color:#9e9e9e">Applied Columns</div>
<div class="t" style="left:942.3px;top:162.8px;font-size:12.5px;font-weight:bold;color:#9e9e9e">User Entitlements</div>
<div class="t" style="left:1065.3px;top:162.8px;font-size:12.5px;font-weight:bold;color:#9e9e9e">Run Schedule</div>
<div class="t" style="left:1163px;top:162.8px;font-size:12.5px;font-weight:bold;color:#9e9e9e">Run Execution Results</div>
<div class="a" style="left:704px;top:190px;width:637px;height:1px;background:#e3e3e3"></div>
<div class="a" style="left:704px;top:191px;width:637px;height:406px;overflow:hidden">
<div class="t" style="left:-150.5px;top:-8.5px;width:300px;text-align:right;font-size:12.4px;color:#555">Data Quality Dimension</div>
<div class="a" style="left:160.0px;top:-12.7px;width:150px;height:24.5px;background:#eee;border:1px solid #e2e2e2;border-radius:3px"></div><div class="t" style="left:167.0px;top:-6.2px;font-size:12.4px;color:#777">Validity</div><svg style="left:289.0px;top:-2.2px" width="10" height="6" viewBox="0 0 10 6"><path d="M0 0 H10 L5 5.5Z" fill="#c2c2c2"/></svg>
<div class="t" style="left:-150.5px;top:24.7px;width:300px;text-align:right;font-size:12.4px;color:#555">Catalog</div>
<div class="a" style="left:160.0px;top:20.5px;width:425px;height:24.5px;background:#eee;border:1px solid #e2e2e2;border-radius:3px"></div><div class="t" style="left:167.0px;top:27.0px;font-size:12.4px;color:#777">ecommerce catalog</div>
<div class="t" style="left:-150.5px;top:57.9px;width:300px;text-align:right;font-size:12.4px;color:#555">1. Semantic Object</div>
<div class="a" style="left:160.0px;top:53.5px;width:150px;height:24.5px;background:#eee;border:1px solid #e2e2e2;border-radius:3px"></div><div class="t" style="left:167.0px;top:60.0px;font-size:12.4px;color:#777">Customer</div><svg style="left:289.0px;top:64.0px" width="10" height="6" viewBox="0 0 10 6"><path d="M0 0 H10 L5 5.5Z" fill="#c2c2c2"/></svg>
<div class="t" style="left:99.8px;top:57.9px;width:300px;text-align:right;font-size:12.4px;color:#555">Concept</div>
<div class="a" style="left:410.5px;top:53.5px;width:175px;height:24.5px;background:#eee;border:1px solid #e2e2e2;border-radius:3px"></div><div class="t" style="left:417.5px;top:60.0px;font-size:12.4px;color:#777">Contact Number</div><svg style="left:564.5px;top:64.0px" width="10" height="6" viewBox="0 0 10 6"><path d="M0 0 H10 L5 5.5Z" fill="#c2c2c2"/></svg>
<div class="t" style="left:16.0px;top:100.7px;font-size:12.5px;font-weight:bold;color:#444">Flag an exception when</div>
<div class="a" style="left:16.0px;top:116.0px;width:595px;height:223px;border:1px solid #dedede"></div>
<div class="t" style="left:-149.5px;top:133.5px;width:300px;text-align:right;font-size:12.4px;color:#555">Rule Sequence Type</div>
<div class="a" style="left:161.0px;top:129.3px;width:150px;height:24.5px;background:#eee;border:1px solid #e2e2e2;border-radius:3px"></div><div class="t" style="left:168.0px;top:135.8px;font-size:12.4px;color:#777">Single Attribute</div><svg style="left:290.0px;top:139.8px" width="10" height="6" viewBox="0 0 10 6"><path d="M0 0 H10 L5 5.5Z" fill="#c2c2c2"/></svg>
<div class="t" style="left:-149.5px;top:166.7px;width:300px;text-align:right;font-size:12.4px;color:#555">Concept</div>
<div class="a" style="left:161.0px;top:162.5px;width:150px;height:24.5px;background:#eee;border:1px solid #e2e2e2;border-radius:3px"></div><div class="t" style="left:168.0px;top:169.0px;font-size:12.4px;color:#777">Contact Number</div><svg style="left:290.0px;top:173.0px" width="10" height="6" viewBox="0 0 10 6"><path d="M0 0 H10 L5 5.5Z" fill="#c2c2c2"/></svg>
<div class="t" style="left:100.5px;top:166.7px;width:300px;text-align:right;font-size:12.4px;color:#555">Value Type</div>
<div class="a" style="left:411.0px;top:162.5px;width:175px;height:24.5px;background:#eee;border:1px solid #e2e2e2;border-radius:3px"></div><div class="t" style="left:418.0px;top:169.0px;font-size:12.4px;color:#777">value</div><svg style="left:565.0px;top:173.0px" width="10" height="6" viewBox="0 0 10 6"><path d="M0 0 H10 L5 5.5Z" fill="#c2c2c2"/></svg>
<div class="t" style="left:-149.5px;top:199.7px;width:300px;text-align:right;font-size:12.4px;color:#555">Operator</div>
<div class="a" style="left:161.0px;top:195.5px;width:150px;height:24.5px;background:#eee;border:1px solid #e2e2e2;border-radius:3px"></div><div class="t" style="left:168.0px;top:202.0px;font-size:12.4px;color:#777">is within</div><svg style="left:290.0px;top:206.0px" width="10" height="6" viewBox="0 0 10 6"><path d="M0 0 H10 L5 5.5Z" fill="#c2c2c2"/></svg>
<div class="t" style="left:-149.5px;top:232.8px;width:300px;text-align:right;font-size:12.4px;color:#555">Data Set Name</div>
<div class="a" style="left:161.0px;top:228.5px;width:150px;height:24.5px;background:#eee;border:1px solid #e2e2e2;border-radius:3px"></div><div class="t" style="left:168.0px;top:235.0px;font-size:12.4px;color:#777">Individual 5K Generat</div><svg style="left:290.0px;top:239.0px" width="10" height="6" viewBox="0 0 10 6"><path d="M0 0 H10 L5 5.5Z" fill="#c2c2c2"/></svg>
<div class="t" style="left:100.5px;top:232.8px;width:300px;text-align:right;font-size:12.4px;color:#555">Column</div>
<div class="a" style="left:411.0px;top:228.5px;width:175px;height:24.5px;background:#eee;border:1px solid #e2e2e2;border-radius:3px"></div><div class="t" style="left:418.0px;top:235.0px;font-size:12.4px;color:#777">phone1</div><svg style="left:565.0px;top:239.0px" width="10" height="6" viewBox="0 0 10 6"><path d="M0 0 H10 L5 5.5Z" fill="#c2c2c2"/></svg>
<div class="t" style="left:-149.5px;top:265.8px;width:300px;text-align:right;font-size:12.4px;color:#555">Within Filter</div>
<div class="a" style="left:161.0px;top:261.3px;width:150px;height:59.5px;background:#eee;border:1px solid #e2e2e2;border-radius:3px"></div>
<div class="a" style="left:627.0px;top:0.4px;width:10px;height:355px;background:#e8e8ec;border-radius:5px"></div>
<div class="a" style="left:627.0px;top:99.7px;width:10px;height:255px;background:#b5b5b5;border-radius:5px"></div>
</div>
<div class="a" style="left:720px;top:186px;width:88px;height:4px;background:#13689e"></div>
<!-- FOOTER -->
<div class="a" style="left:0;top:621px;width:1366px;height:29px;background:#e1e3ef"></div>
<svg style="left:16.5px;top:630.3px" width="16" height="16" viewBox="0 0 22 22">
  <circle cx="10.9" cy="10.9" r="10.8" fill="#0e1535"/>
  <path d="M3.2 10 C3.5 8.5 4.5 7.3 5.8 6.6 L6.6 4.6 L8.3 6.2 Q10.9 5.4 13.5 6.2 L15.2 4.6 L16 6.6 C17.3 7.3 18.3 8.5 18.6 10 C19.2 12.5 19.3 15.5 18.4 18.2 L16.9 18.6 L16.5 20.3 Q10.9 22.6 5.3 20.3 L4.9 18.6 L3.4 18.2 C2.5 15.5 2.6 12.5 3.2 10Z" fill="#e1e3ef"/>
  <path d="M8.8 10.6h1.6M11.4 10.6h1.6" stroke="#0e1535" stroke-width="1"/>
</svg>
<div class="t" style="left:32.2px;top:629.6px;font-size:17.5px;font-weight:bold;color:#0e1535;letter-spacing:-0.25px">fluree</div>
<div class="a" style="left:93px;top:631px;width:1px;height:12px;background:#b9bbc6"></div>
<div class="t" style="left:107px;top:632.2px;font-size:10.9px;color:#7a7a7a">Copyright © 2023 Fluree - All rights reserved</div>
<div class="a" style="left:331px;top:631px;width:1px;height:12px;background:#b9bbc6"></div>
<div class="t" style="left:1195.7px;top:632.6px;font-size:10.1px;color:#7a7a7a">Version: v2.0.1</div>
<div class="t" style="left:1271.6px;top:632.6px;font-size:10.5px;color:#7a7a7a">Environment: fsqa</div>

</body></html>
